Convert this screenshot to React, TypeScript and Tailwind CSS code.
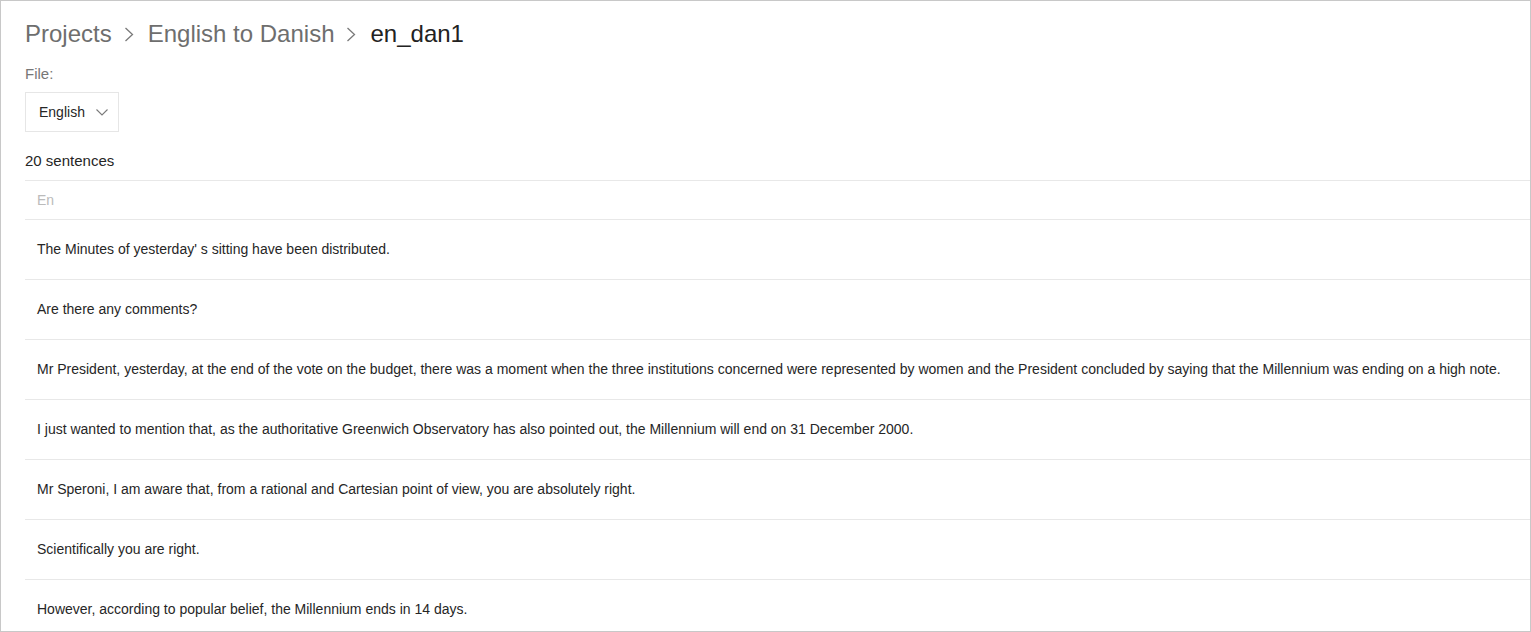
const sentences = [
  "The Minutes of yesterday' s sitting have been distributed.",
  'Are there any comments?',
  'Mr President, yesterday, at the end of the vote on the budget, there was a moment when the three institutions concerned were represented by women and the President concluded by saying that the Millennium was ending on a high note.',
  'I just wanted to mention that, as the authoritative Greenwich Observatory has also pointed out, the Millennium will end on 31 December 2000.',
  'Mr Speroni, I am aware that, from a rational and Cartesian point of view, you are absolutely right.',
  'Scientifically you are right.',
  'However, according to popular belief, the Millennium ends in 14 days.',
];

function Sep() {
  return (
    <svg className="ml-[12px] mr-[14px] h-[15px] w-[10px]" viewBox="0 0 10 15" fill="none">
      <polyline points="1.5,1 8.5,7.5 1.5,14" stroke="#7a7a7a" strokeWidth="1.3" />
    </svg>
  );
}

export default function App() {
  return (
    <div className="h-[632px] w-full overflow-hidden border border-[#c8c8c8] bg-white pl-6 font-['Liberation_Sans',Arial,sans-serif]">
      <nav className="mt-[15px] flex h-9 items-center text-2xl">
        <span className="text-[#6e6e6e]">Projects</span>
        <Sep />
        <span className="text-[#6e6e6e]">English to Danish</span>
        <Sep />
        <span className="text-[#222]">en_dan1</span>
      </nav>

      <div className="mt-[11px] text-[15px] leading-[22px] text-[#777]">File:</div>

      <button className="mt-[7px] flex h-10 w-[94px] items-center border border-[#e6e6e6] bg-white pl-[13px] text-sm text-[#262626]">
        English
        <svg className="ml-[11px] h-[7px] w-[12px]" viewBox="0 0 12 7" fill="none">
          <polyline points="0.5,0.5 6,6 11.5,0.5" stroke="#7a7a7a" strokeWidth="1.1" />
        </svg>
      </button>

      <div className="mt-[18px] text-[15px] leading-[22px] text-[#262626]">20 sentences</div>

      <div className="mt-2 border-t border-[#e8e8e8]">
        <div className="flex h-[39px] items-center border-b border-[#e8e8e8] px-3 pb-px text-sm text-[#bbb]">En</div>
        {sentences.map((s, i) => (
          <div
            key={i}
            className="flex h-[60px] items-center border-b border-[#e8e8e8] px-3 pb-px text-sm text-[#262626]"
          >
            {s}
          </div>
        ))}
      </div>
    </div>
  );
}
